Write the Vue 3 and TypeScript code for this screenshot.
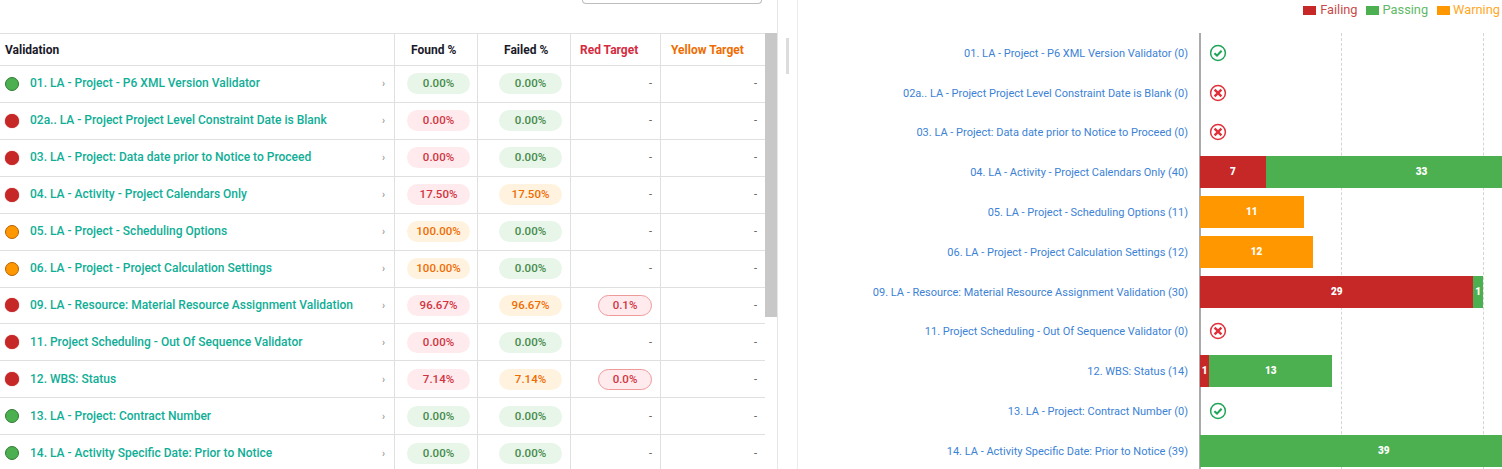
<template>
  <div class="page">
    <section class="left-pane">
      <div class="toolbar">
        <div class="search-box"></div>
      </div>
      <div class="table-wrap">
        <div class="table">
          <div class="row head">
            <div class="cell name-cell">Validation</div>
            <div class="cell found-cell">Found %</div>
            <div class="cell failed-cell">Failed %</div>
            <div class="cell target-cell red-head">Red Target</div>
            <div class="cell yellow-cell yellow-head">Yellow Target</div>
          </div>
          <div v-for="row in rows" :key="row.name" class="row body-row">
            <div class="cell name-cell">
              <span class="dot" :class="row.status"></span>
              <span class="name">{{ row.name }}</span>
              <span class="chev">›</span>
            </div>
            <div class="cell found-cell center">
              <span class="pill" :class="row.foundTone">{{ row.found }}</span>
            </div>
            <div class="cell failed-cell center">
              <span class="pill" :class="row.failedTone">{{ row.failed }}</span>
            </div>
            <div class="cell target-cell right">
              <span v-if="row.target" class="pill target-pill">{{ row.target }}</span>
              <span v-else class="dash">-</span>
            </div>
            <div class="cell yellow-cell right"><span class="dash">-</span></div>
          </div>
        </div>
        <div class="scrollbar"><div class="thumb"></div></div>
      </div>
    </section>

    <div class="gutter"><div class="gutter-thumb"></div></div>

    <section class="right-pane">
      <div class="legend">
        <span class="legend-item failing"><i></i>Failing</span>
        <span class="legend-item passing"><i></i>Passing</span>
        <span class="legend-item warning"><i></i>Warning</span>
      </div>
      <div class="chart">
        <div class="axis"></div>
        <div class="grid-line" :style="{ left: gridLeft(15) }"></div>
        <div class="grid-line" :style="{ left: gridLeft(30) }"></div>
        <div v-for="bar in bars" :key="bar.label" class="chart-row">
          <div class="chart-label">{{ bar.label }}</div>
          <div class="chart-track">
            <template v-if="bar.parts.length">
              <div
                v-for="(part, i) in bar.parts"
                :key="i"
                class="seg"
                :class="part.kind"
                :style="{ width: part.value * unit + 'px' }"
              >{{ part.value }}</div>
            </template>
            <svg v-else-if="bar.empty === 'ok'" class="state-icon" viewBox="0 0 18 18" width="18" height="18">
              <circle cx="9" cy="9" r="7.4" fill="none" stroke="#1ea557" stroke-width="1.5" />
              <path d="M5.4 9.2 L8 11.6 L12.6 6.7" fill="none" stroke="#1ea557" stroke-width="2.1" />
            </svg>
            <svg v-else class="state-icon" viewBox="0 0 18 18" width="18" height="18">
              <circle cx="9" cy="9" r="7.4" fill="none" stroke="#e2303a" stroke-width="1.5" />
              <path d="M5.6 5.6 L12.4 12.4 M12.4 5.6 L5.6 12.4" fill="none" stroke="#e2303a" stroke-width="2.4" />
            </svg>
          </div>
        </div>
      </div>
    </section>
  </div>
</template>

<script setup lang="ts">
type Tone = 'green' | 'red' | 'amber'

interface Row {
  name: string
  status: 'pass' | 'fail' | 'warn'
  found: string
  foundTone: Tone
  failed: string
  failedTone: Tone
  target?: string
}

interface Bar {
  label: string
  parts: { kind: 'failing' | 'passing' | 'warning'; value: number }[]
  empty?: 'ok' | 'bad'
}

const unit = 9.43
const gridLeft = (n: number) => 402 + n * unit + 'px'

const rows: Row[] = [
  { name: '01. LA - Project - P6 XML Version Validator', status: 'pass', found: '0.00%', foundTone: 'green', failed: '0.00%', failedTone: 'green' },
  { name: '02a.. LA - Project Project Level Constraint Date is Blank', status: 'fail', found: '0.00%', foundTone: 'red', failed: '0.00%', failedTone: 'green' },
  { name: '03. LA - Project: Data date prior to Notice to Proceed', status: 'fail', found: '0.00%', foundTone: 'red', failed: '0.00%', failedTone: 'green' },
  { name: '04. LA - Activity - Project Calendars Only', status: 'fail', found: '17.50%', foundTone: 'red', failed: '17.50%', failedTone: 'amber' },
  { name: '05. LA - Project - Scheduling Options', status: 'warn', found: '100.00%', foundTone: 'amber', failed: '0.00%', failedTone: 'green' },
  { name: '06. LA - Project - Project Calculation Settings', status: 'warn', found: '100.00%', foundTone: 'amber', failed: '0.00%', failedTone: 'green' },
  { name: '09. LA - Resource: Material Resource Assignment Validation', status: 'fail', found: '96.67%', foundTone: 'red', failed: '96.67%', failedTone: 'amber', target: '0.1%' },
  { name: '11. Project Scheduling - Out Of Sequence Validator', status: 'fail', found: '0.00%', foundTone: 'red', failed: '0.00%', failedTone: 'green' },
  { name: '12. WBS: Status', status: 'fail', found: '7.14%', foundTone: 'red', failed: '7.14%', failedTone: 'amber', target: '0.0%' },
  { name: '13. LA - Project: Contract Number', status: 'pass', found: '0.00%', foundTone: 'green', failed: '0.00%', failedTone: 'green' },
  { name: '14. LA - Activity Specific Date: Prior to Notice', status: 'pass', found: '0.00%', foundTone: 'green', failed: '0.00%', failedTone: 'green' },
]

const bars: Bar[] = [
  { label: '01. LA - Project - P6 XML Version Validator (0)', parts: [], empty: 'ok' },
  { label: '02a.. LA - Project Project Level Constraint Date is Blank (0)', parts: [], empty: 'bad' },
  { label: '03. LA - Project: Data date prior to Notice to Proceed (0)', parts: [], empty: 'bad' },
  { label: '04. LA - Activity - Project Calendars Only (40)', parts: [{ kind: 'failing', value: 7 }, { kind: 'passing', value: 33 }] },
  { label: '05. LA - Project - Scheduling Options (11)', parts: [{ kind: 'warning', value: 11 }] },
  { label: '06. LA - Project - Project Calculation Settings (12)', parts: [{ kind: 'warning', value: 12 }] },
  { label: '09. LA - Resource: Material Resource Assignment Validation (30)', parts: [{ kind: 'failing', value: 29 }, { kind: 'passing', value: 1 }] },
  { label: '11. Project Scheduling - Out Of Sequence Validator (0)', parts: [], empty: 'bad' },
  { label: '12. WBS: Status (14)', parts: [{ kind: 'failing', value: 1 }, { kind: 'passing', value: 13 }] },
  { label: '13. LA - Project: Contract Number (0)', parts: [], empty: 'ok' },
  { label: '14. LA - Activity Specific Date: Prior to Notice (39)', parts: [{ kind: 'passing', value: 39 }] },
]
</script>

<style>
html,
body {
  margin: 0;
  overflow: hidden;
  background: #fff;
}
</style>

<style scoped>
.page {
  display: flex;
  width: 1502px;
  height: 469px;
  overflow: hidden;
  font-family: Roboto, "Liberation Sans", sans-serif;
  background: #fff;
}

.left-pane {
  width: 778px;
  flex: none;
  box-sizing: border-box;
  border-right: 1px solid #e6e6e6;
}

.toolbar {
  height: 33px;
  box-sizing: border-box;
  padding-left: 582px;
}

.search-box {
  width: 180px;
  height: 4px;
  box-sizing: border-box;
  border: 1px solid #bdbdbd;
  border-top: 0;
  border-radius: 0 0 4px 4px;
}

.table-wrap {
  display: flex;
  height: 436px;
  overflow: hidden;
}

.table {
  width: 765px;
  flex: none;
}

.row {
  display: flex;
  box-sizing: border-box;
  height: 36.93px;
  border-bottom: 1px solid #e0e0e0;
}

.head {
  height: 33px;
  border-top: 1px solid #e0e0e0;
  font-size: 12px;
  font-weight: 700;
  color: #1a1a2a;
}

.cell {
  display: flex;
  align-items: center;
  box-sizing: border-box;
  border-right: 1px solid #e0e0e0;
}

.name-cell {
  width: 395px;
  padding: 0 9px 0 5px;
}

.found-cell {
  width: 83px;
}

.failed-cell {
  width: 93px;
}

.target-cell {
  width: 90px;
}

.yellow-cell {
  width: 104px;
  border-right: 0;
}

.center {
  justify-content: center;
}

.found-cell.center {
  padding-left: 5px;
}

.failed-cell.center {
  padding-left: 13px;
}

.right {
  justify-content: flex-end;
  padding-right: 8px;
}

.head .found-cell {
  padding-left: 16px;
}

.head .failed-cell {
  padding-left: 26px;
}

.head .target-cell {
  padding-left: 9px;
}

.head .yellow-cell {
  padding-left: 10px;
}

.red-head {
  color: #d52b3f;
}

.yellow-head {
  color: #ef6c00;
}

.dot {
  width: 14px;
  height: 14px;
  flex: none;
  box-sizing: border-box;
  border-radius: 50%;
  margin-right: 11px;
}

.dot.pass {
  background: #4caf50;
  border: 1px solid #2e7d32;
}

.dot.fail {
  background: #c62828;
  box-shadow: 0 0 1px #c62828;
}

.dot.warn {
  background: #ff9800;
  border: 1px solid #b95f00;
}

.name {
  flex: 1;
  margin-bottom: 1px;
  font-size: 12px;
  font-weight: 500;
  color: #0fae96;
  white-space: nowrap;
}

.chev {
  font-size: 10px;
  color: #888;
}

.pill {
  display: inline-block;
  box-sizing: border-box;
  width: 63px;
  height: 21px;
  line-height: 21px;
  border-radius: 11px;
  font-size: 11.5px;
  font-weight: 500;
  text-align: center;
}

.pill.green {
  background: #e8f5e9;
  color: #458a49;
}

.pill.red {
  background: #ffebee;
  color: #d13440;
}

.pill.amber {
  background: #fff3e0;
  color: #ef6c00;
}

.target-pill {
  width: 54px;
  line-height: 19px;
  background: #ffebee;
  color: #d13440;
  border: 1px solid #ef9a9a;
}

.dash {
  font-size: 11px;
  color: #555;
}

.scrollbar {
  width: 12px;
  flex: none;
}

.thumb {
  height: 284px;
  background: #c8c8c8;
}

.gutter {
  width: 19px;
  flex: none;
  box-sizing: border-box;
  padding: 38px 0 0 8px;
}

.gutter-thumb {
  width: 3px;
  height: 36px;
  background: #dcdcdc;
}

.right-pane {
  flex: 1;
  min-width: 0;
  border-left: 1px solid #ebebeb;
}

.legend {
  display: flex;
  justify-content: flex-end;
  height: 33px;
  margin-right: 2px;
  font-size: 12.8px;
  line-height: 19px;
}

.legend-item {
  display: flex;
  align-items: flex-start;
}

.legend-item i {
  width: 13px;
  height: 9px;
  margin: 6px 4px 0 0;
}

.legend-item.failing {
  margin-right: 8px;
  color: #c94a4a;
}

.legend-item.failing i {
  background: #c62828;
}

.legend-item.passing {
  margin-right: 9px;
  color: #63b867;
}

.legend-item.passing i {
  background: #4caf50;
}

.legend-item.warning {
  color: #ffa726;
}

.legend-item.warning i {
  margin-right: 3px;
  background: #ff9800;
}

.chart {
  position: relative;
  height: 436px;
  overflow: hidden;
}

.axis {
  position: absolute;
  top: 0;
  bottom: 0;
  left: 401px;
  width: 2px;
  background: #aaa;
}

.grid-line {
  position: absolute;
  top: 0;
  bottom: 0;
  width: 0;
  border-left: 1px dashed #d4d4d4;
}

.chart-row {
  position: relative;
  display: flex;
  align-items: center;
  height: 39.8px;
}

.chart-row:first-of-type {
  margin-top: 0.5px;
}

.chart-label {
  width: 390px;
  flex: none;
  margin-top: 1px;
  text-align: right;
  font-size: 11px;
  color: #3c82d6;
  white-space: nowrap;
}

.chart-track {
  display: flex;
  align-items: center;
  height: 100%;
  flex: none;
  margin-left: 12px;
}

.seg {
  flex: none;
  height: 32px;
  line-height: 32px;
  text-align: center;
  font-size: 10px;
  font-weight: 900;
  color: #fff;
}

.seg.failing {
  background: #c62828;
}

.seg.passing {
  background: #4caf50;
}

.seg.warning {
  background: #ff9800;
}

.state-icon {
  margin-left: 9px;
  display: block;
}
</style>
